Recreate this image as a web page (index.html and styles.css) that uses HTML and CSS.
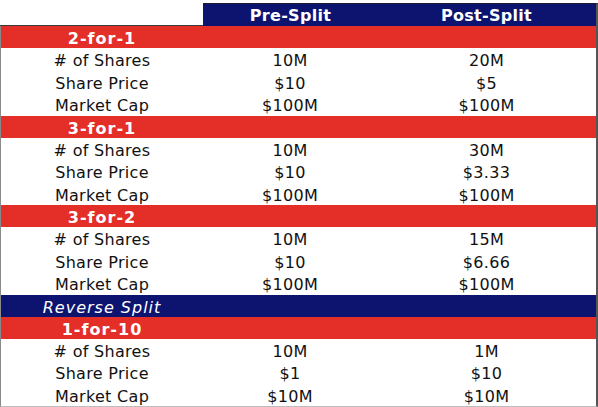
FILE: index.html
```html
<!DOCTYPE html>
<html>
<head>
<meta charset="utf-8">
<link rel="stylesheet" href="styles.css">
</head>
<body>
<div class="page">
  <div class="head">
    <div class="blank"></div>
    <div class="navy-head">
      <div class="hcell pre">Pre-Split</div>
      <div class="hcell post">Post-Split</div>
    </div>
  </div>
  <div class="table">
    <div class="sec red"><span class="label">2-for-1</span></div>
    <div class="row"><span>#&nbsp;of Shares</span><span>10M</span><span>20M</span></div>
    <div class="row"><span>Share Price</span><span>$10</span><span>$5</span></div>
    <div class="row"><span>Market Cap</span><span>$100M</span><span>$100M</span></div>
    <div class="sec red"><span class="label">3-for-1</span></div>
    <div class="row"><span>#&nbsp;of Shares</span><span>10M</span><span>30M</span></div>
    <div class="row"><span>Share Price</span><span>$10</span><span>$3.33</span></div>
    <div class="row"><span>Market Cap</span><span>$100M</span><span>$100M</span></div>
    <div class="sec red"><span class="label">3-for-2</span></div>
    <div class="row"><span>#&nbsp;of Shares</span><span>10M</span><span>15M</span></div>
    <div class="row"><span>Share Price</span><span>$10</span><span>$6.66</span></div>
    <div class="row"><span>Market Cap</span><span>$100M</span><span>$100M</span></div>
    <div class="sec navy"><span class="label italic">Reverse Split</span></div>
    <div class="sec red"><span class="label">1-for-10</span></div>
    <div class="row"><span>#&nbsp;of Shares</span><span>10M</span><span>1M</span></div>
    <div class="row"><span>Share Price</span><span>$1</span><span>$10</span></div>
    <div class="row"><span>Market Cap</span><span>$10M</span><span>$10M</span></div>
  </div>
</div>
</body>
</html>
```
FILE: styles.css
```css
html, body {
  margin: 0;
  padding: 0;
  background: #ffffff;
}
.page {
  width: 598px;
  padding-top: 3px;
  font-family: "DejaVu Sans", Verdana, sans-serif;
  font-size: 16px;
  letter-spacing: 0.3px;
  color: #111111;
}
.head {
  display: grid;
  grid-template-columns: 203px 1fr;
  height: 23px;
}
.blank {
  border-bottom: 1px solid #3a3a3a;
}
.navy-head {
  background: #0c1470;
  border-top: 1px solid #1a1a30;
  border-left: 1px solid #1a1a30;
  border-right: 2px solid #555555;
  display: grid;
  grid-template-columns: 173px 1fr;
  color: #ffffff;
  font-weight: bold;
}
.hcell {
  text-align: center;
  padding-top: 2px;
  line-height: 19px;
}
.table {
  border-left: 1px solid #8a8a8a;
  border-right: 2px solid #555555;
  border-bottom: 1px solid #bdbdbd;
}
.sec {
  height: 22px;
  box-sizing: border-box;
  padding-top: 3px;
  line-height: 19px;
  color: #ffffff;
}
.sec.red {
  background: #e32f27;
}
.sec.navy {
  background: #0c1470;
}
.label {
  display: block;
  width: 202px;
  text-align: center;
  font-weight: bold;
  letter-spacing: 1px;
}
.label.italic {
  font-weight: normal;
  font-style: italic;
}
.row {
  display: grid;
  grid-template-columns: 202px 174px 1fr;
  height: 22.5px;
  box-sizing: border-box;
  padding-top: 3px;
  line-height: 19.5px;
}
.row span {
  text-align: center;
}
```
